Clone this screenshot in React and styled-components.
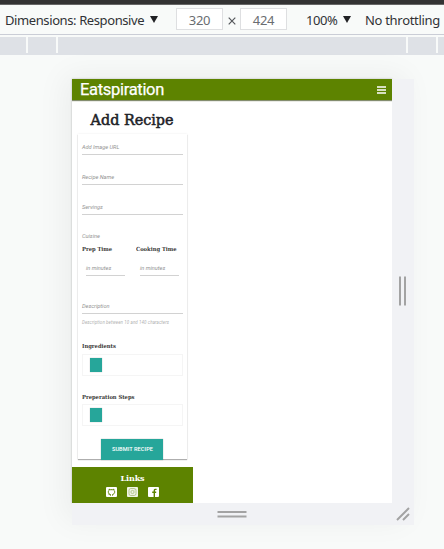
import React from "react";
import styled, { createGlobalStyle } from "styled-components";

const GlobalStyle = createGlobalStyle`
  *, *::before, *::after { box-sizing: border-box; }
  body { margin: 0; background: #f8faf9; overflow: hidden; }
`;

const Shell = styled.div`
  width: 444px;
  height: 549px;
  overflow: hidden;
  background: #f8faf9;
  font-family: "Noto Sans", sans-serif;
`;

const Toolbar = styled.header`
  display: flex;
  align-items: center;
  height: 35px;
  padding: 0 0 0 5px;
  border-top: 4px solid #333;
  border-bottom: 1px solid #cacdd6;
  box-shadow: inset 0 1px #666;
  color: #303236;
  font-size: 13px;
  white-space: nowrap;
`;

const ToolLabel = styled.span`
  flex: none;
  width: ${(p) => p.$width}px;
  margin: 2px 0 0 ${(p) => p.$left || 0}px;
  letter-spacing: ${(p) => p.$spacing}px;
`;

const Arrow = styled.i`
  flex: none;
  width: 8px;
  height: 7px;
  margin: 1px ${(p) => p.$gap}px 0 0;
  background: #202124;
  clip-path: polygon(0 0, 100% 0, 50% 100%);
`;

const SizeField = styled.span`
  flex: none;
  width: 47px;
  height: 22px;
  margin-bottom: 1px;
  border: 1px solid #dedfe1;
  background: #fff;
  color: #6a6d71;
  text-align: center;
  line-height: 23px;
  letter-spacing: -0.3px;
`;

const Times = styled.svg`
  flex: none;
  width: 8px;
  height: 8px;
  margin: 4px 4px 0 5px;
`;

const Ruler = styled.div`
  display: flex;
  height: 18px;
  margin-top: 2px;
  background: #dee1e6;
`;

const RulerCell = styled.span`
  width: ${(p) => p.$width}px;
  height: 16px;
  border-right: ${(p) => (p.$last ? 0 : 2)}px solid #f8faf9;
`;

const Stage = styled.main`
  display: grid;
  grid-template: 424px 22px / 320px 22px;
  width: 342px;
  margin: 24px 0 0 72px;
  background: #f1f2f5;
  box-shadow: -8px -4px 28px rgba(0, 0, 0, 0.05);
`;

const Device = styled.section`
  display: flex;
  flex-direction: column;
  background: #fff;
  box-shadow: 0 0 2px rgba(0, 0, 0, 0.25);
  font-family: Roboto, sans-serif;
  overflow: hidden;
`;

const Handle = styled.div`
  display: flex;
  align-items: center;
  justify-content: center;
  background: #f1f2f5;
  padding-right: ${(p) => p.$nudge || 0}px;
  svg { display: block; }
`;

const Navbar = styled.nav`
  flex: none;
  display: flex;
  justify-content: space-between;
  align-items: center;
  height: 21px;
  padding: 0 6px 0 8px;
  background: #5d8300;
  box-shadow: 0 1px 1px rgba(50, 65, 15, 0.6);
`;

const Brand = styled.span`
  color: #fff;
  font-size: 16.5px;
  line-height: 21px;
  letter-spacing: -0.31px;
  -webkit-text-stroke: 0.25px #fff;
`;

const Title = styled.h1`
  flex: none;
  width: 121px;
  height: 35px;
  margin: 0;
  padding-top: 9px;
  text-align: center;
  white-space: nowrap;
  color: #1d2227;
  font: 500 15.6px/22px "Roboto Slab", "DejaVu Serif", serif;

  span {
    display: inline-block;
    margin: 0 -20px;
    transform: scaleX(0.92);
    -webkit-text-stroke: 0.55px #1d2227;
  }
`;

const Card = styled.form`
  flex: none;
  display: flex;
  flex-direction: column;
  width: 109px;
  height: 325px;
  margin: -1px 0 0 6px;
  padding: 0 4px;
  box-shadow: 0 1px 1px rgba(0, 0, 0, 0.3), 0 0 2px rgba(0, 0, 0, 0.08);
`;

const Field = styled.label`
  flex: none;
  display: flex;
  align-items: flex-end;
  width: ${(p) => p.$width || 101}px;
  height: ${(p) => p.$height}px;
  padding-bottom: 3px;
  border-bottom: 1px solid ${(p) => (p.$plain ? "transparent" : "#d2d2d2")};
  color: #929292;
  font-size: 5.6px;
  font-style: italic;
  line-height: 8px;
  white-space: nowrap;
`;

const Pair = styled.div`
  flex: none;
  display: grid;
  grid-template-columns: 54px 47px;
  padding-left: ${(p) => p.$indent || 0}px;
`;

const Heading = styled.h2`
  flex: none;
  height: 8px;
  margin: ${(p) => p.$top || 0}px 0 0;
  color: #3a3a38;
  font: bold 5.6px/8px "Roboto Slab", "DejaVu Serif", serif;
  white-space: nowrap;

  span {
    display: inline-block;
    transform: scaleX(0.93);
    transform-origin: left;
  }
`;

const Helper = styled.small`
  flex: none;
  height: 8px;
  margin-top: 5px;
  color: #b0b0b0;
  font-size: 4.4px;
  font-style: italic;
  line-height: 8px;
  letter-spacing: 0.12px;
  white-space: nowrap;
`;

const ListBox = styled.div`
  flex: none;
  display: flex;
  align-items: center;
  width: 101px;
  height: 22px;
  margin-top: ${(p) => p.$top}px;
  padding-left: 7px;
  border: 1px solid #f5f5f5;
`;

const AddButton = styled.button`
  width: 12px;
  height: 14px;
  padding: 0;
  border: 0;
  background: #26a69a;
  box-shadow: 0 0 1px rgba(0, 0, 0, 0.3);
`;

const Submit = styled.button`
  flex: none;
  align-self: center;
  width: 62px;
  height: 21px;
  margin: 13px 0 0 -1px;
  padding: 0 0 0 1px;
  border: 0;
  background: #26a69a;
  box-shadow: 0 0 1px rgba(0, 0, 0, 0.35);
  color: #fff;
  font: 500 5.6px/21px Roboto, sans-serif;
  letter-spacing: 0.06px;
`;

const Footer = styled.footer`
  flex: none;
  display: flex;
  flex-direction: column;
  align-items: center;
  width: 121px;
  height: 36px;
  margin-top: 8px;
  padding-top: 6px;
  background: #5d8300;
`;

const LinksTitle = styled.h3`
  height: 10px;
  margin: 0;
  color: #fff;
  font: bold 8px/10px "Roboto Slab", "DejaVu Serif", serif;
  letter-spacing: -0.1px;
`;

const Socials = styled.div`
  display: flex;
  gap: 10px;
  margin-top: 4px;
  padding-right: 1px;
  svg { display: block; }
`;

const SocialIcon = ({ children, faded }) => (
  <svg width="11" height="10" viewBox="0 0 11 10">
    <rect width="11" height="10" rx="1" fill={faded ? "#f1f4e6" : "#fff"} />
    {children}
  </svg>
);

const fields = [
  ["Add Image URL", 21],
  ["Recipe Name", 30],
  ["Servings", 30],
];

export default function App() {
  return (
    <Shell>
      <GlobalStyle />
      <Toolbar>
        <ToolLabel $width={145} $spacing={-0.4}>Dimensions: Responsive</ToolLabel>
        <Arrow $gap={18} />
        <SizeField>320</SizeField>
        <Times viewBox="0 0 8 8">
          <path d="M.7.7l6.6 6.6M7.3.7L.7 7.3" stroke="#55585c" strokeWidth="1.2" />
        </Times>
        <SizeField>424</SizeField>
        <ToolLabel $width={37} $left={19} $spacing={-0.45}>100%</ToolLabel>
        <Arrow $gap={14} />
        <ToolLabel $width={80} $spacing={-0.3}>No throttling</ToolLabel>
      </Toolbar>
      <Ruler>
        <RulerCell $width={28} />
        <RulerCell $width={30} />
        <RulerCell $width={350} />
        <RulerCell $width={30} />
        <RulerCell $width={6} $last />
      </Ruler>
      <Stage>
        <Device>
          <Navbar>
            <Brand>Eatspiration</Brand>
            <svg width="9" height="8" viewBox="0 0 9 8">
              <path d="M0 1h9M0 4h9M0 7h9" stroke="#fff" strokeWidth="1.3" />
            </svg>
          </Navbar>
          <Title><span>Add Recipe</span></Title>
          <Card>
            {fields.map(([name, height]) => (
              <Field key={name} $height={height}>{name}</Field>
            ))}
            <Field $height={29} $plain>Cuisine</Field>
            <Pair>
              <Heading $top={1}><span>Prep Time</span></Heading>
              <Heading $top={1}><span>Cooking Time</span></Heading>
            </Pair>
            <Pair $indent={4}>
              <Field $width={39} $height={23}>in minutes</Field>
              <Field $width={39} $height={23}>in minutes</Field>
            </Pair>
            <Field $height={38}>Description</Field>
            <Helper>Description between 10 and 140 characters</Helper>
            <Heading $top={15}><span>Ingredients</span></Heading>
            <ListBox $top={4}><AddButton type="button" aria-label="Add ingredient" /></ListBox>
            <Heading $top={17}><span>Preperation Steps</span></Heading>
            <ListBox $top={3}><AddButton type="button" aria-label="Add step" /></ListBox>
            <Submit type="button">SUBMIT RECIPE</Submit>
          </Card>
          <Footer>
            <LinksTitle>Links</LinksTitle>
            <Socials>
              <SocialIcon>
                <path d="M4.5 8.6V7.5C1.8 6.9 2 4 3.1 3.3L3.1 2.2l1.2.5h2.4l1.2-.5v1.1C9 4 9.2 6.9 6.5 7.5v1.1" fill="none" stroke="#5d8300" strokeWidth="1" />
                <path d="M2 6.8l2.3 1.2" stroke="#5d8300" strokeWidth=".6" />
              </SocialIcon>
              <SocialIcon faded>
                <rect x="2" y="1.5" width="7" height="7" rx="1.8" fill="none" stroke="#a9bd7c" strokeWidth=".8" />
                <circle cx="5.5" cy="5" r="1.6" fill="none" stroke="#a9bd7c" strokeWidth=".8" />
                <circle cx="7.6" cy="2.9" r=".4" fill="#a9bd7c" />
              </SocialIcon>
              <SocialIcon>
                <path d="M8.6 2.4H7.8Q6.3 2.2 6.3 3.7V10M4.2 5.2h4" fill="none" stroke="#5d8300" strokeWidth="1.4" />
              </SocialIcon>
            </Socials>
          </Footer>
        </Device>
        <Handle $nudge={2}>
          <svg width="8" height="30" viewBox="0 0 8 30">
            <path d="M2 .5v29M7 .5v29" stroke="#a3a3a3" strokeWidth="2" />
          </svg>
        </Handle>
        <Handle>
          <svg width="30" height="8" viewBox="0 0 30 8">
            <path d="M.5 2h29M.5 6.5h29" stroke="#a3a3a3" strokeWidth="2" />
          </svg>
        </Handle>
        <Handle>
          <svg width="14" height="14" viewBox="0 0 14 14">
            <path d="M1 13L13 1M7 13l6-6" stroke="#a3a3a3" strokeWidth="2" />
          </svg>
        </Handle>
      </Stage>
    </Shell>
  );
}
